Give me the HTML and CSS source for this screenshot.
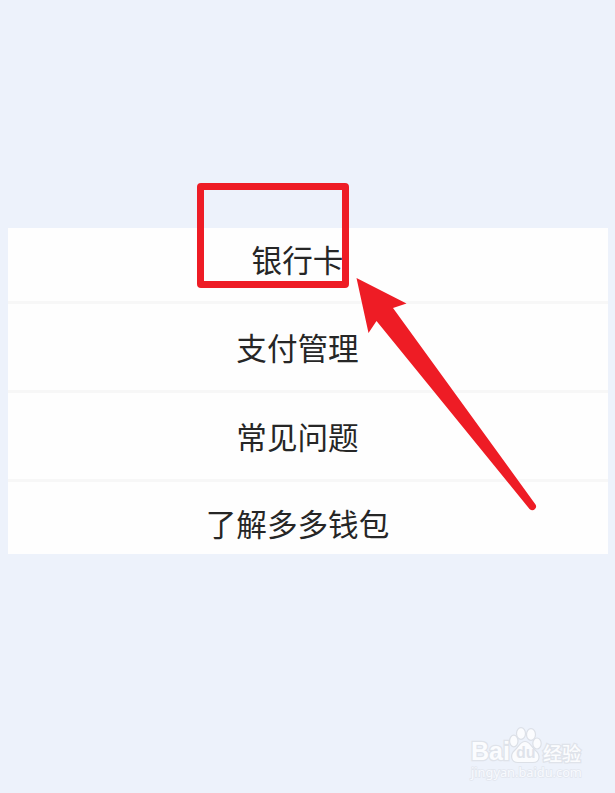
FILE: index.html
```html
<!DOCTYPE html>
<html lang="zh-CN">
<head>
    <meta charset="UTF-8">
    <meta name="viewport" content="width=device-width, initial-scale=1.0">
    <title>多多钱包</title>
    <link rel="stylesheet" href="styles.css">
</head>
<body>
    <div class="page">
        <ul class="menu">
            <li class="first">银行卡</li>
            <li>支付管理</li>
            <li>常见问题</li>
            <li class="last">了解多多钱包</li>
        </ul>

        <div class="highlight"></div>
        <svg class="arrow" width="184" height="238" viewBox="0 0 184 238">
            <path d="M3.500 5 L53.500 30.500 L40 35 L182.500 231.500 Q184 234 182 236 Q179.500 238.500 176.500 236 L23.500 48 L15.500 60 Z"/>
        </svg>

        <div class="watermark">
            <div class="brand">
                <span class="bai">Bai</span>
                <div class="paw">
                    <svg width="34" height="38" viewBox="0 0 34 38">
                        <ellipse cx="4.800" cy="14" rx="4.200" ry="5.800"/>
                        <ellipse cx="12" cy="6.500" rx="4.500" ry="5.800"/>
                        <ellipse cx="22" cy="7.500" rx="4.500" ry="5.800"/>
                        <ellipse cx="28" cy="16.500" rx="4.200" ry="5.500"/>
                        <path d="M16 14.500 C11 14.500 10 19.500 5.500 23.500 C1 27.500 1.500 35.500 9 35.500 L24 35.500 C31.500 35.500 31.500 27.500 26.500 23.500 C22 19.500 21 14.500 16 14.500 Z"/>
                    </svg>
                    <span class="du">du</span>
                </div>
                <span class="jingyan">经验</span>
            </div>
            <div class="site">jingyan.baidu.com</div>
        </div>
    </div>
</body>
</html>
```
FILE: styles.css
```css
* {
    box-sizing: border-box;
}
body {
    margin: 0;
    background-color: #edf2fb;
    font-family: "Noto Sans CJK SC", sans-serif;
}
.page {
    position: relative;
    height: 793px;
    padding: 228px 7px 0 8px;
    overflow: hidden;
}
.menu {
    list-style: none;
    margin: 0;
    padding: 0;
    background-color: #fefefe;
}
.menu li {
    height: 89px;
    padding-right: 21px;
    border-bottom: 3px solid #f7f7f7;
    color: #262626;
    font-size: 30.6px;
    line-height: 86px;
    text-align: center;
}
.menu .first {
    height: 76px;
    line-height: 63px;
}
.menu .last {
    height: 72px;
    border-bottom: none;
    line-height: 83px;
}
/* red marks over the menu */
.highlight {
    position: absolute;
    left: 197px;
    top: 183px;
    width: 152px;
    height: 105px;
    border: 7px solid #ee1c25;
    border-radius: 4px;
}
.arrow {
    position: absolute;
    left: 353px;
    top: 273px;
    fill: #ee1c25;
}
/* watermark */
.watermark {
    position: absolute;
    left: 471px;
    top: 727px;
    color: #fbfcfe;
}
.brand {
    display: flex;
    align-items: flex-end;
    height: 38px;
}
.bai,
.jingyan {
    -webkit-text-stroke: 2.5px #dfe3ea;
    paint-order: stroke fill;
}
.bai {
    width: 38px;
    font: bold 25px/28px "Liberation Sans", sans-serif;
}
.paw {
    position: relative;
    width: 34px;
    height: 38px;
}
.paw svg {
    display: block;
    fill: #fbfcfe;
    stroke: #dce0e7;
    stroke-width: 1.2;
}
.du {
    position: absolute;
    left: 7px;
    top: 17px;
    color: #dfe3ea;
    font: bold 16px/18px "Liberation Sans", sans-serif;
}
.jingyan {
    font-size: 19px;
    font-weight: 500;
    line-height: 25px;
}
.site {
    color: #f8fafe;
    font: 12.8px/14px "Noto Sans", sans-serif;
    -webkit-text-stroke: 1.5px #e2e6ee;
    paint-order: stroke fill;
}
```
